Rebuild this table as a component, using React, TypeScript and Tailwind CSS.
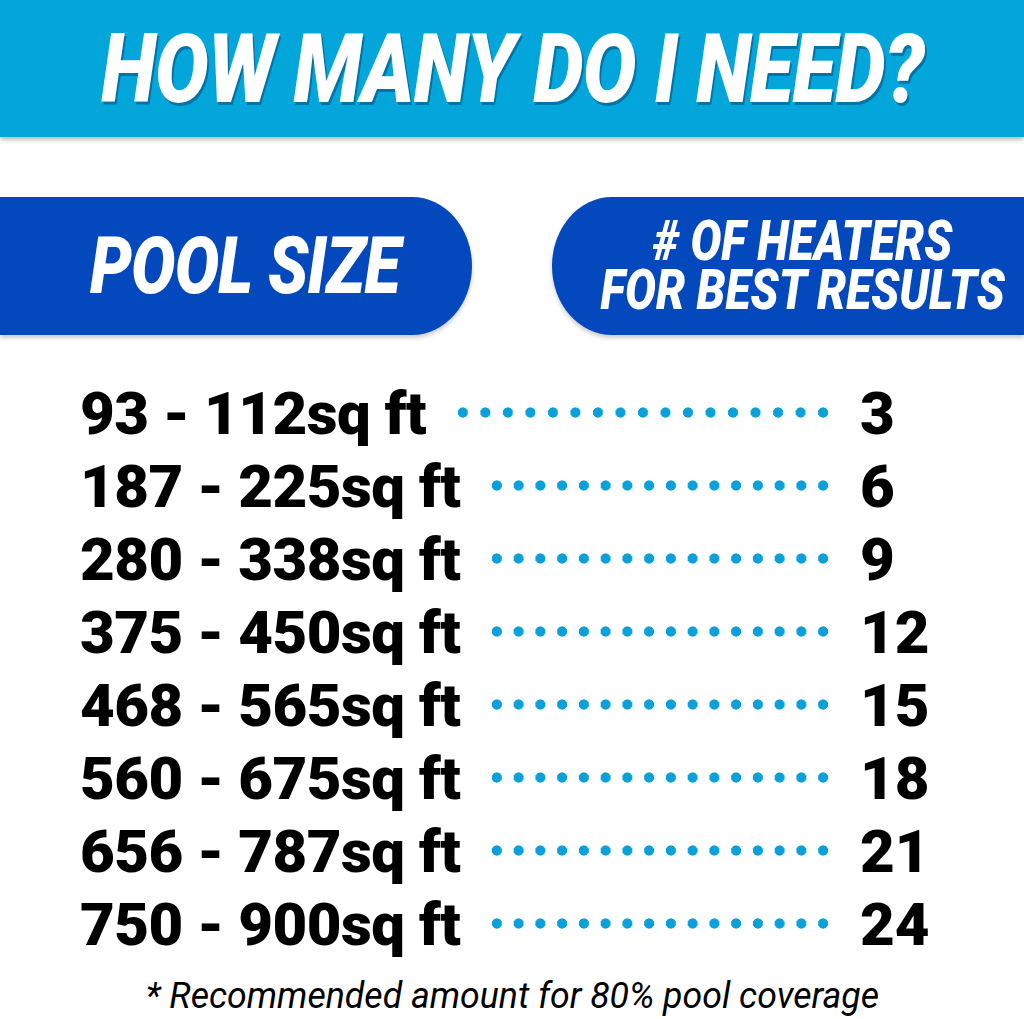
import React from 'react';

interface Row {
  size: string;
  count: number;
}

const rows: Row[] = [
  { size: '93 - 112sq ft', count: 3 },
  { size: '187 - 225sq ft', count: 6 },
  { size: '280 - 338sq ft', count: 9 },
  { size: '375 - 450sq ft', count: 12 },
  { size: '468 - 565sq ft', count: 15 },
  { size: '560 - 675sq ft', count: 18 },
  { size: '656 - 787sq ft', count: 21 },
  { size: '750 - 900sq ft', count: 24 },
];

const font = { fontFamily: 'Roboto, "DejaVu Sans", sans-serif' };

const App: React.FC = () => {
  return (
    <div className="w-[1024px] h-[1019px] bg-white overflow-hidden flex flex-col" style={font}>
      {/* Title bar */}
      <div className="h-[137px] bg-[#02a6da] flex items-center justify-center shadow-[0_3px_4px_rgba(0,0,0,0.25)] shrink-0">
        <span className="inline-block text-white italic font-black text-[96px] leading-none scale-x-[0.835] tracking-[-1px] [text-shadow:2px_3px_0_rgba(0,40,90,0.4)]">
          HOW MANY DO I NEED?
        </span>
      </div>

      {/* Column headings */}
      <div className="mt-[60px] h-[138px] flex justify-between shrink-0">
        <div className="w-[472px] bg-[#0448bd] [border-radius:0_60px_60px_0/0_69px_69px_0] shadow-[0_3px_4px_rgba(0,0,0,0.2)] flex items-center pl-[90px]">
          <span className="inline-block origin-left text-white italic font-black text-[79px] leading-none scale-x-[0.84] tracking-[-1px]">
            POOL SIZE
          </span>
        </div>
        <div className="w-[472px] bg-[#0448bd] [border-radius:60px_0_0_60px/69px_0_0_69px] shadow-[0_3px_4px_rgba(0,0,0,0.2)] flex items-center justify-center pl-[30px]">
          <span className="inline-block text-center text-white italic font-black text-[55px] leading-[49px] scale-x-[0.84] whitespace-nowrap">
            # OF HEATERS
            <br />
            FOR BEST RESULTS
          </span>
        </div>
      </div>

      {/* Table */}
      <div className="mt-[42px] pl-[80px] flex flex-col">
        {rows.map((r) => (
          <div key={r.size} className="h-[73px] flex items-center">
            <div className="w-[754px] flex items-center">
              <span className="shrink-0 text-black font-black text-[60px] leading-none tracking-[-0.5px] whitespace-nowrap">
                {r.size}
              </span>
              <div className="flex-1 ml-[26px] h-[11px] -mt-[3px] bg-[radial-gradient(circle,#0aa0da_4.8px,transparent_5.4px)] bg-[length:21.7px_11px] bg-repeat-space bg-right" />
            </div>
            <span className="ml-[26px] text-black font-black text-[60px] leading-none">
              {r.count}
            </span>
          </div>
        ))}
      </div>

      {/* Footnote */}
      <div className="mt-[15px] flex justify-center">
        <span className="inline-block italic text-black text-[36px] leading-[40px] scale-x-[0.99] whitespace-nowrap">
          * Recommended amount for 80% pool coverage
        </span>
      </div>
    </div>
  );
};

export default App;
